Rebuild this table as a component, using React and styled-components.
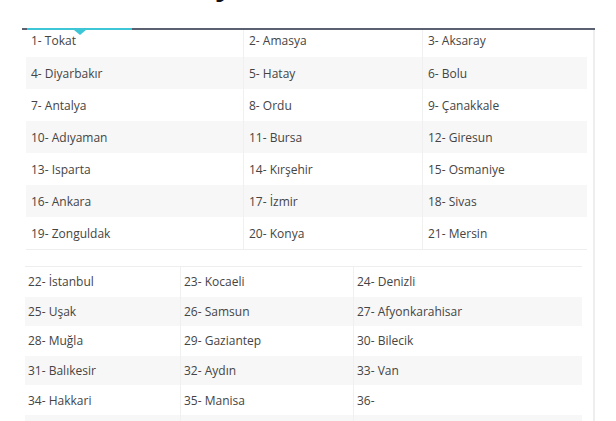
import React from "react";
import styled, { createGlobalStyle } from "styled-components";

const GlobalStyle = createGlobalStyle`
  body {
    margin: 0;
    background: #ffffff;
    font-family: "Open Sans", "Liberation Sans", sans-serif;
  }
`;

const Page = styled.div`
  width: 616px;
  height: 421px;
  overflow: hidden;
`;

const HeadingClip = styled.div`
  height: 28px;
  overflow: hidden;
`;

const Heading = styled.h2`
  margin: -31px 0 0 0;
  padding-left: 137px;
  font-size: 30px;
  line-height: 30px;
  font-weight: 700;
  color: #111;
  white-space: nowrap;
`;

const TabBar = styled.div`
  margin-left: 22px;
  width: 573px;
  display: flex;
  border-bottom: 2px solid #5b6170;
  height: 0;
`;

const Tab = styled.div`
  position: relative;
  margin-left: 5px;
  width: 105px;
  height: 0;
  border-bottom: 2px solid #3cc6d6;
  margin-bottom: -2px;

  &::after {
    content: "";
    position: absolute;
    left: 50%;
    top: 2px;
    margin-left: -6px;
    border-left: 6px solid transparent;
    border-right: 6px solid transparent;
    border-top: 5px solid #3cc6d6;
  }
`;

const Panel = styled.div`
  margin-left: 22px;
  width: 573px;
  box-sizing: border-box;
  border-right: 2px solid #eeeeee;
  padding: 0 6px 40px 4px;
`;

const Table = styled.div`
  display: grid;
  grid-template-columns: ${(p) => p.$cols};
  width: ${(p) => p.$width}px;
  margin-left: ${(p) => p.$shift || 0}px;
  margin-top: ${(p) => p.$gap || 0}px;
  border-top: ${(p) => (p.$framed ? "1px solid #eeeeee" : "none")};
  border-bottom: 1px solid #eeeeee;
  border-right: ${(p) => (p.$framed ? "1px solid #eeeeee" : "none")};
  box-sizing: border-box;
`;

const Cell = styled.div`
  display: flex;
  align-items: center;
  box-sizing: border-box;
  height: ${(p) => p.$h}px;
  padding: 0 0 ${(p) => p.$pb || 0}px ${(p) => p.$pad}px;
  background: ${(p) => (p.$alt ? "#f7f7f7" : "#ffffff")};
  border-left: ${(p) => (p.$first ? "none" : "1px solid #f0f0f0")};
  font-size: 12px;
  color: #444444;
  white-space: nowrap;
`;

const top = [
  ["1- Tokat", "2- Amasya", "3- Aksaray"],
  ["4- Diyarbakır", "5- Hatay", "6- Bolu"],
  ["7- Antalya", "8- Ordu", "9- Çanakkale"],
  ["10- Adıyaman", "11- Bursa", "12- Giresun"],
  ["13- Isparta", "14- Kırşehir", "15- Osmaniye"],
  ["16- Ankara", "17- İzmir", "18- Sivas"],
  ["19- Zonguldak", "20- Konya", "21- Mersin"],
];

const bottom = [
  ["22- İstanbul", "23- Kocaeli", "24- Denizli"],
  ["25- Uşak", "26- Samsun", "27- Afyonkarahisar"],
  ["28- Muğla", "29- Gaziantep", "30- Bilecik"],
  ["31- Balıkesir", "32- Aydın", "33- Van"],
  ["34- Hakkari", "35- Manisa", "36-"],
  ["", "", ""],
];

export default function App() {
  return (
    <Page>
      <GlobalStyle />
      <HeadingClip>
        <Heading>Türkiye'nin İlleri ve Plaka Kodları</Heading>
      </HeadingClip>
      <TabBar>
        <Tab />
      </TabBar>
      <Panel>
        <Table $cols="217px 179px 165px" $width={561}>
          {top.map((row, i) =>
            row.map((name, j) => (
              <Cell
                key={`${i}-${j}`}
                $h={i === 0 ? 27 : 32}
                $pb={i === 0 ? 7 : 0}
                $pad={5}
                $alt={i % 2 === 1}
                $first={j === 0}
              >
                {name}
              </Cell>
            ))
          )}
        </Table>
        <Table $cols="155px 173px 229px" $width={557} $shift={-1} $gap={16} $framed>
          {bottom.map((row, i) =>
            row.map((name, j) => (
              <Cell
                key={`${i}-${j}`}
                $h={29.6}
                $pad={3}
                $alt={i % 2 === 1}
                $first={j === 0}
              >
                {name}
              </Cell>
            ))
          )}
        </Table>
      </Panel>
    </Page>
  );
}
